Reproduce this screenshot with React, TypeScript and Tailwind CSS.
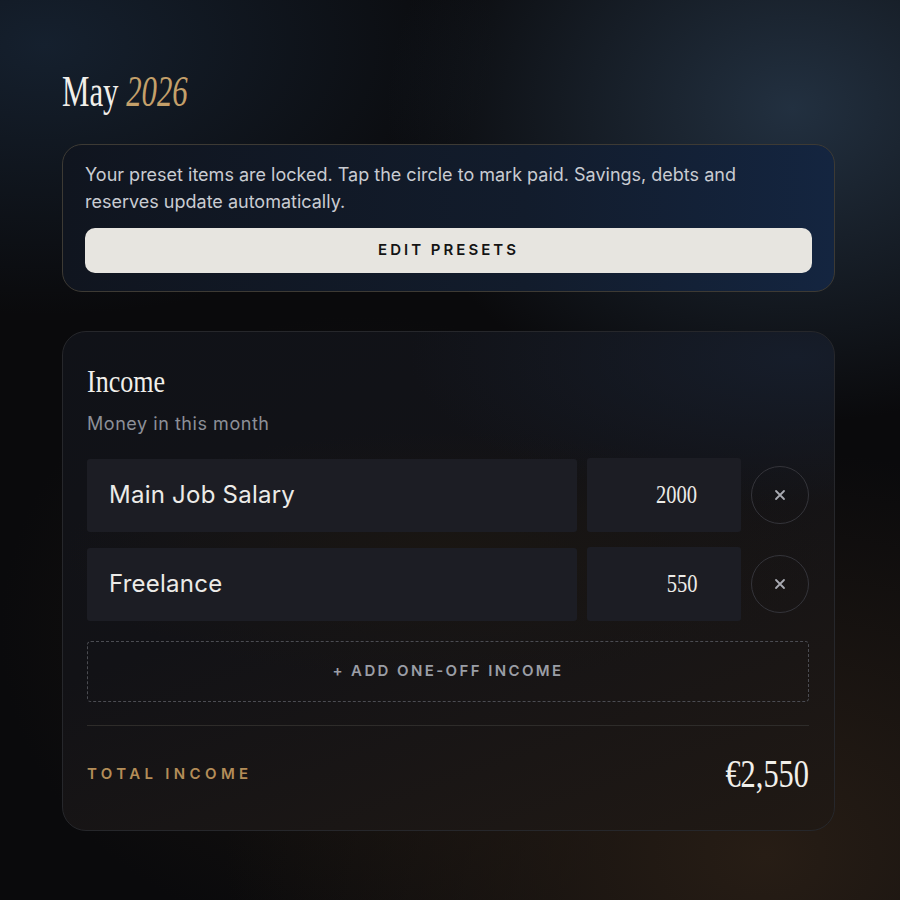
import React from 'react';

const sans = "font-['Inter','Noto_Sans',sans-serif]";
const serif = "font-['Liberation_Serif','DejaVu_Serif',serif]";

interface IncomeRowProps {
  name: string;
  amount: string;
}

function IncomeRow({ name, amount }: IncomeRowProps) {
  return (
    <div className="flex items-center gap-[10px]">
      <div className="flex h-[73px] flex-1 items-center rounded-[3px] bg-[#1c1d24] pl-[22px]">
        <span className={`${sans} text-[24px] tracking-[0.01em] text-[#ecebe8]`}>{name}</span>
      </div>
      <div className="flex h-[74px] w-[154px] items-center justify-end rounded-[3px] bg-[#1c1d24] pr-[44px]">
        <span className={`${serif} inline-block origin-right scale-x-[0.82] text-[25px] text-[#ecebe8]`}>
          {amount}
        </span>
      </div>
      <button className="flex h-[58px] w-[58px] items-center justify-center rounded-full border border-[#34343a] text-[#a9abb2]">
        <svg width="12" height="12" viewBox="0 0 12 12" fill="none" stroke="currentColor" strokeWidth="1.8" strokeLinecap="round">
          <path d="M2 2l8 8M10 2l-8 8" />
        </svg>
      </button>
    </div>
  );
}

export default function App() {
  return (
    <div className="relative h-[900px] w-full overflow-hidden bg-[#0a0a0c] bg-[radial-gradient(ellipse_45%_35%_at_88%_12%,#223040_0%,transparent_100%),radial-gradient(ellipse_50%_30%_at_5%_5%,#15202e_0%,transparent_100%),radial-gradient(ellipse_60%_45%_at_85%_95%,#271d15_0%,transparent_100%),radial-gradient(ellipse_40%_35%_at_40%_70%,#1a1510_0%,transparent_100%)]">
      <div className="pl-[62px] pr-[65px] pt-[70px]">
        <h1 className={`${serif} inline-block origin-left scale-x-[0.7] text-[44px] leading-[44px] text-[#f1efea]`}>
          May <span className="italic text-[#c4a06a]">2026</span>
        </h1>

        <div className="mt-[30px] rounded-[20px] border border-[#3d3a34] bg-[linear-gradient(90deg,#10151f_0%,#121c2c_60%,#142540_100%)] px-[22px] pb-[18px] pt-[16px]">
          <p className={`${sans} text-[18px] leading-[27px] text-[#c9ccd2]`}>
            Your preset items are locked. Tap the circle to mark paid. Savings, debts and reserves update automatically.
          </p>
          <button className={`${sans} mt-[13px] flex h-[45px] w-full items-center justify-center rounded-[10px] bg-[#e7e5e0] text-[15px] font-semibold tracking-[0.2em] text-[#141414]`}>
            EDIT PRESETS
          </button>
        </div>

        <div className="mt-[39px] rounded-[24px] border border-[#26272b] bg-[radial-gradient(ellipse_50%_30%_at_95%_5%,#161d2a_0%,transparent_100%),radial-gradient(ellipse_50%_25%_at_50%_45%,#1a1612_0%,transparent_100%),linear-gradient(160deg,#101218_0%,#121216_45%,#201914_100%)] pb-[32px] pl-[24px] pr-[25px] pt-[32px]">
          <h2 className={`${serif} inline-block origin-left scale-x-[0.84] text-[31px] leading-[36px] text-[#f1efea]`}>
            Income
          </h2>
          <p className={`${sans} mt-[12px] text-[18px] leading-[24px] tracking-[0.03em] text-[#8c8f97]`}>Money in this month</p>

          <div className="mt-[22px] flex flex-col gap-[15px]">
            <IncomeRow name="Main Job Salary" amount="2000" />
            <IncomeRow name="Freelance" amount="550" />
          </div>

          <button className={`${sans} mt-[20px] flex h-[61px] w-full items-center justify-center rounded-[4px] border border-dashed border-[#4b4c52] text-[15px] font-semibold tracking-[0.16em] text-[#9b9ea6]`}>
            + ADD ONE-OFF INCOME
          </button>

          <div className="mt-[23px] h-px w-full bg-[#2e2c2a]" />

          <div className="mt-[24px] flex items-center justify-between">
            <span className={`${sans} text-[15px] font-semibold tracking-[0.29em] text-[#b48d58]`}>TOTAL INCOME</span>
            <span className={`${serif} inline-block origin-right scale-x-[0.76] text-[40px] leading-[48px] text-[#f1efea]`}>
              €2,550
            </span>
          </div>
        </div>
      </div>
    </div>
  );
}
